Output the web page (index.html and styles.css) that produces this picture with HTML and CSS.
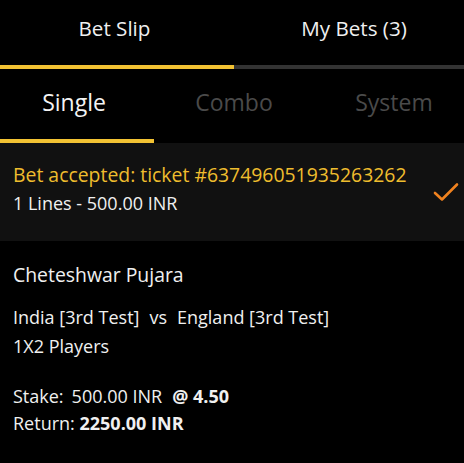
FILE: index.html
```html
<!DOCTYPE html>
<html lang="en">
<head>
  <meta charset="UTF-8" />
  <meta name="viewport" content="width=device-width, initial-scale=1.0" />
  <title>Bet Slip</title>
  <link rel="stylesheet" href="styles.css">
</head>
<body>
  <!-- Main tabs -->
  <div class="main-tabs">
    <div class="main-tab active">Bet Slip</div>
    <div class="main-tab">My Bets (3)</div>
  </div>

  <!-- Bet type tabs -->
  <div class="type-tabs">
    <div class="type-tab active">Single</div>
    <div class="type-tab">Combo</div>
    <div class="type-tab">System</div>
  </div>

  <!-- Accepted notice -->
  <div class="accepted">
    <div class="accepted-text">
      <div class="accepted-title">Bet accepted: ticket #637496051935263262</div>
      <div class="accepted-lines">1 Lines - 500.00 INR</div>
    </div>
    <svg class="check" width="28" height="20" viewBox="0 0 28 20">
      <polyline points="3,11 10,17.5 25,2.5" fill="none" stroke="#f0821f" stroke-width="2.6" stroke-linecap="round" stroke-linejoin="round" />
    </svg>
  </div>

  <!-- Bet details -->
  <div class="details">
    <div class="player">Cheteshwar Pujara</div>
    <div class="match">
      <div>India [3rd Test]<span class="vs">vs</span>England [3rd Test]</div>
      <div>1X2 Players</div>
    </div>
    <div class="stake">
      <div>Stake:<span class="gap">500.00 INR</span><b class="odds">@ 4.50</b></div>
      <div>Return: <b>2250.00 INR</b></div>
    </div>
  </div>
</body>
</html>
```

FILE: styles.css
```css
/* Base */
body {
  margin: 0;
  background: #000;
  color: #f0f0f0;
  font-family: "Open Sans", "Liberation Sans", sans-serif;
}

/* Main tabs */
.main-tabs {
  display: grid;
  grid-template-columns: 234px 1fr;
}
.main-tab {
  font-size: 20.6px;
  line-height: 28px;
  padding: 14px 0 23px;
  text-align: center;
  border-bottom: 4px solid #333;
}
.main-tab.active {
  border-bottom-color: #f2c233;
  padding-right: 5px;
}
.main-tab + .main-tab {
  padding-left: 10px;
}

/* Bet type tabs */
.type-tabs {
  display: grid;
  grid-template-columns: 154px 160px 150px;
}
.type-tab {
  font-size: 23px;
  line-height: 30px;
  padding: 18px 0 22px;
  text-align: center;
  color: #4a4a4a;
  border-bottom: 4px solid transparent;
}
.type-tab.active {
  color: #f4f4f4;
  border-bottom-color: #f2c233;
  padding-right: 6px;
}
.type-tab:last-child {
  padding-left: 10px;
}

/* Accepted notice */
.accepted {
  display: flex;
  align-items: center;
  justify-content: space-between;
  background: #111;
  padding: 18px 4px 24px 13px;
}
.accepted-title {
  color: #efbd2e;
  font-size: 19.4px;
  line-height: 28px;
}
.accepted-lines {
  font-size: 18px;
  line-height: 28px;
}
.check {
  margin-top: 6px;
}

/* Details */
.details {
  padding: 20px 13px 0;
}
.player {
  font-size: 19.4px;
  line-height: 28px;
}
.match {
  margin-top: 14px;
  font-size: 18px;
  line-height: 29px;
}
.vs {
  margin: 0 10px;
}
.stake {
  margin-top: 22px;
  font-size: 18px;
  line-height: 27px;
}
.gap {
  margin-left: 8px;
}
.odds {
  margin-left: 10px;
}
```
